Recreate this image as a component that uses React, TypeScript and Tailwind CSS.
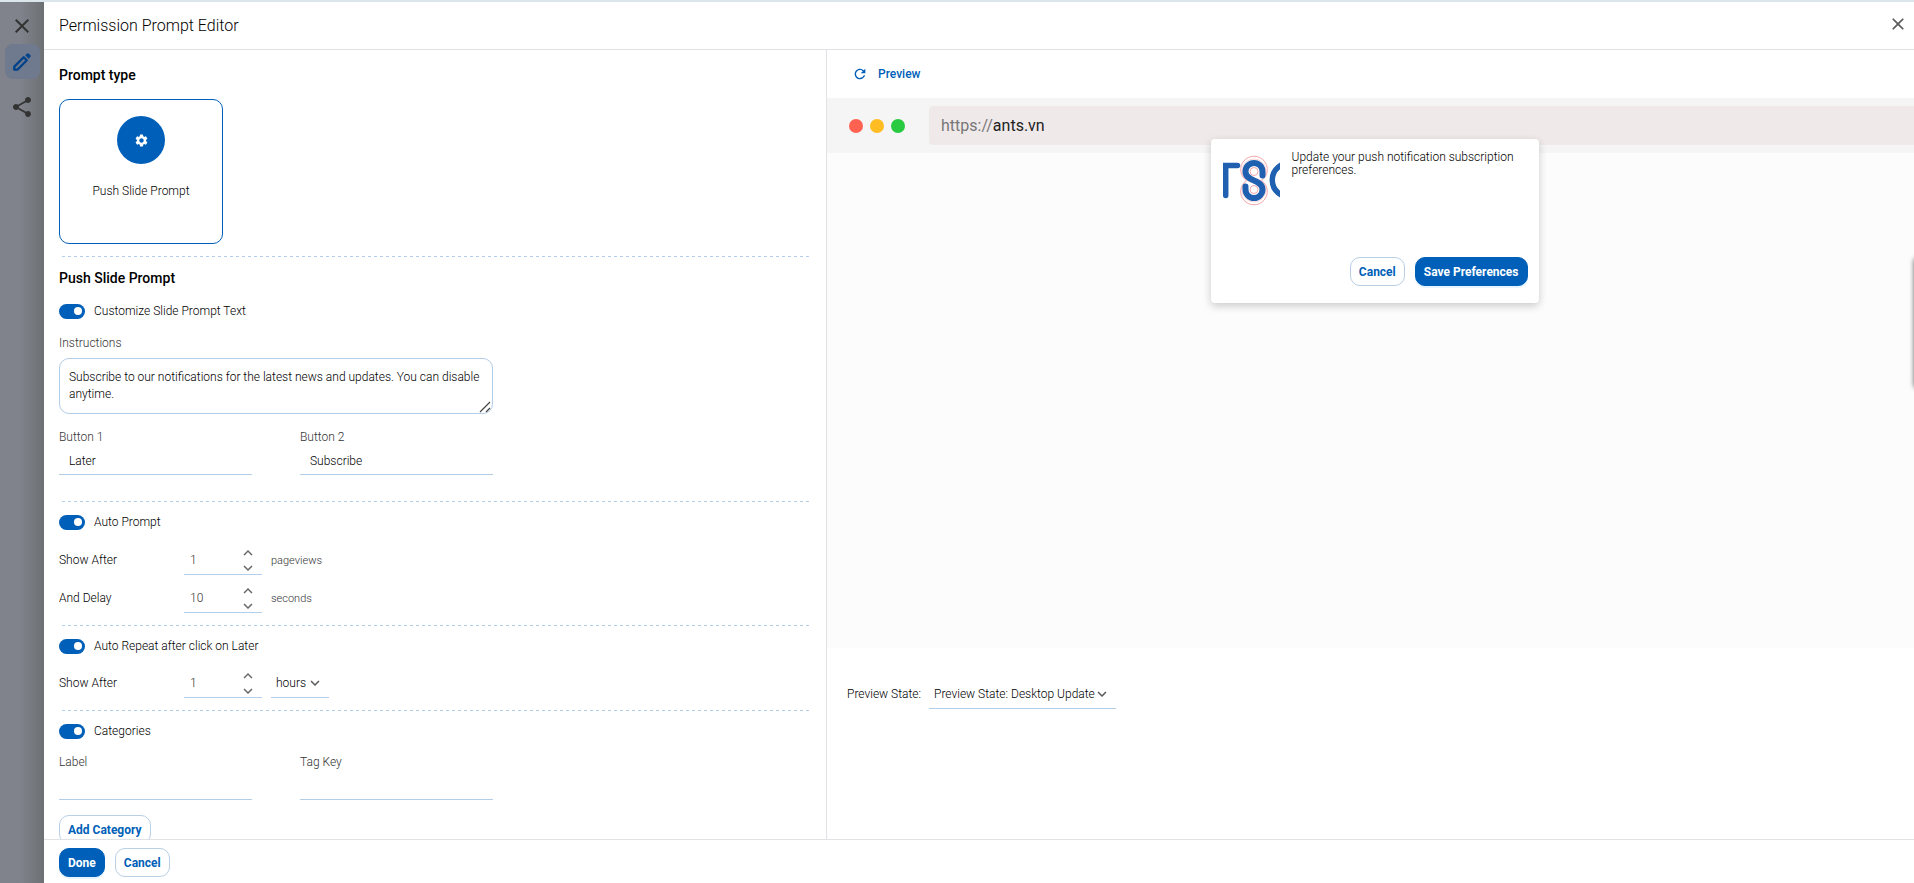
import { useId, useState, type ReactNode } from "react";
import {
  MdClose,
  MdKeyboardArrowDown,
  MdKeyboardArrowUp,
  MdRefresh,
  MdSettings,
  MdShare,
} from "react-icons/md";

function Divider() {
  return (
    <hr className="mr-3.5 ml-[3px] h-px border-0 bg-[repeating-linear-gradient(to_right,#b3cee8_0_3px,transparent_3px_6px)]" />
  );
}

function Toggle({ label }: { label: string }) {
  return (
    <label className="flex h-4 w-fit cursor-pointer items-center gap-[9px]">
      <input type="checkbox" defaultChecked className="peer sr-only" />
      <span className="flex h-[15px] w-[26px] items-center rounded-full bg-gray-400 px-[3px] peer-checked:justify-end peer-checked:bg-[#005fb8]">
        <span className="size-2 rounded-full bg-white" />
      </span>
      <span>{label}</span>
    </label>
  );
}

function Field({ label, value = "" }: { label: string; value?: string }) {
  const id = useId();
  return (
    <div className="flex flex-1 flex-col">
      <label htmlFor={id} className="h-4 leading-4 text-[#333]">
        {label}
      </label>
      <input
        id={id}
        defaultValue={value}
        className="mt-1 h-[26px] w-full border-b border-[#b3cee8] px-2.5 pb-0.5 outline-none"
      />
    </div>
  );
}

function NumberRow({ label, initial, children }: { label: string; initial: number; children: ReactNode }) {
  const id = useId();
  const [value, setValue] = useState(initial);
  return (
    <div className="flex h-[30px] items-center">
      <label htmlFor={id} className="w-[125px]">
        {label}
      </label>
      <div className="flex h-[30px] w-[78px] items-center border-b border-[#b3cee8] pr-[5px]">
        <input
          id={id}
          value={value}
          onChange={(e) => setValue(Number(e.target.value) || 0)}
          className="w-0 flex-1 pl-1.5 text-[#333] outline-none"
        />
        <div className="flex flex-col pb-0.5 text-[#666]">
          <button type="button" aria-label="Increase" onClick={() => setValue(value + 1)} className="h-[15px]">
            <MdKeyboardArrowUp size={18} />
          </button>
          <button type="button" aria-label="Decrease" onClick={() => setValue(value - 1)} className="h-[15px]">
            <MdKeyboardArrowDown size={18} />
          </button>
        </div>
      </div>
      <div className="ml-[9px]">{children}</div>
    </div>
  );
}

function Select({ label, options, className }: { label: string; options: string[]; className: string }) {
  return (
    <div className={`relative flex h-[30px] items-center border-b border-[#b3cee8] ${className}`}>
      <select aria-label={label} className="h-full w-full appearance-none pl-[5px] outline-none">
        {options.map((o) => (
          <option key={o}>{o}</option>
        ))}
      </select>
      <MdKeyboardArrowDown size={18} className="pointer-events-none absolute right-[5px] text-[#595959]" />
    </div>
  );
}

function Button({ primary = false, children }: { primary?: boolean; children: ReactNode }) {
  return (
    <button
      type="button"
      className={`h-[29px] rounded-[10px] border px-2 font-bold whitespace-nowrap ${
        primary
          ? "border-[#005fb8] bg-[#005fb8] text-white shadow-[0_2px_0_rgba(5,145,255,0.1)]"
          : "border-[#b8cfe6] bg-white text-[#005fb8]"
      }`}
    >
      {children}
    </button>
  );
}

function PencilIcon() {
  return (
    <svg viewBox="0 0 18 18" className="size-[18px]" aria-hidden="true">
      <path
        d="M1.300 16.700v-3.100L10.700 4.200l3.100 3.100-9.400 9.400z"
        fill="none"
        stroke="currentColor"
        strokeWidth="2.300"
        strokeLinejoin="round"
      />
      <path d="M12.300 2.300 13.900.8a1.400 1.400 0 0 1 2 0l1.300 1.300a1.400 1.400 0 0 1 0 2l-1.500 1.600z" fill="currentColor" />
    </svg>
  );
}

function BrandLogo() {
  return (
    <svg viewBox="0 0 57 57" className="mt-px size-[57px] shrink-0" fill="none" aria-hidden="true">
      <g stroke="#f08f94" strokeWidth="0.800">
        <path d="M23.500 28.500a13.300 13.300 0 1 1 15 0a13.300 13.300 0 1 1-15 0z" />
        <circle cx="31" cy="19.500" r="4" />
        <circle cx="31" cy="37.500" r="4" />
      </g>
      <g stroke="#f6b9bc" strokeWidth="0.600">
        <circle cx="31" cy="19" r="11.900" />
        <circle cx="31" cy="38" r="11.900" />
      </g>
      <g stroke="#1f61b0" strokeWidth="5.500" strokeLinecap="round">
        <path d="M2.700 43.500V13.500H14.500" strokeLinejoin="miter" />
        <path d="M39.500 23.500v-4a8.500 8.500 0 0 0-17 0c0 5 3.500 7 8.500 9s8.500 4 8.500 9a8.500 8.500 0 0 1-17 0V34.500" strokeWidth="6" />
        <path d="M59 12.500C46 20 46 36 59 43.500" />
      </g>
    </svg>
  );
}

export default function App() {
  return (
    <div className="flex h-screen flex-col overflow-hidden border-t-2 border-[#dbe5ec] bg-white font-[Roboto,sans-serif] text-xs font-light text-black">
      <div className="flex min-h-0 flex-1">
        <nav className="flex w-11 shrink-0 flex-col items-center bg-linear-to-r from-[#80838c] from-45% to-[#6d7073] text-[#333]">
          <button type="button" aria-label="Close" className="mt-3">
            <MdClose size={24} />
          </button>
          <button
            type="button"
            aria-label="Edit"
            className="mt-1.5 flex size-[35px] items-center justify-center rounded-lg bg-[#6f7a8e] text-[#00428a]"
          >
            <PencilIcon />
          </button>
          <button type="button" aria-label="Share" className="mt-4">
            <MdShare size={24} />
          </button>
        </nav>

        <main className="flex min-w-0 flex-1 flex-col">
          <header className="flex h-12 shrink-0 items-center justify-between border-b border-[#e0e2e5] pr-1.5 pl-[15px]">
            <h1 className="text-base">Permission Prompt Editor</h1>
            <button type="button" aria-label="Close editor" className="mb-1 text-[#595959]">
              <MdClose size={20} />
            </button>
          </header>

          <div className="flex min-h-0 flex-1">
            <section className="w-[783px] shrink-0 overflow-y-auto border-r border-[#e0e2e5] pl-[15px] [scrollbar-width:none]">
              <h2 className="pt-4 text-sm leading-[18px] font-medium">Prompt type</h2>
              <button
                type="button"
                className="mt-[15px] flex h-[145px] w-[164px] flex-col items-center rounded-[10px] border border-[#005fb8] pt-4"
              >
                <span className="flex size-12 items-center justify-center rounded-full bg-[#005fb8] text-white">
                  <MdSettings size={15} />
                </span>
                <span className="mt-[19px]">Push Slide Prompt</span>
              </button>

              <div className="mt-3">
                <Divider />
              </div>
              <h2 className="mt-3 text-sm leading-[18px] font-medium">Push Slide Prompt</h2>
              <div className="mt-4">
                <Toggle label="Customize Slide Prompt Text" />
              </div>

              <label htmlFor="instructions" className="mt-4 block leading-4 text-[#333]">
                Instructions
              </label>
              <div className="relative mt-[7px] w-[434px]">
                <textarea
                  id="instructions"
                  className="block h-14 w-full resize-none overflow-hidden rounded-[10px] border border-[#b3cee8] py-2.5 pr-1 pl-[9px] leading-[17px] outline-none"
                  defaultValue="Subscribe to our notifications for the latest news and updates. You can disable anytime."
                />
                <svg
                  viewBox="0 0 12 12"
                  className="pointer-events-none absolute right-0.5 bottom-px size-3"
                  fill="none"
                  stroke="#444"
                  strokeWidth="1.2"
                  aria-hidden="true"
                >
                  <path d="M1 11 11 1M7 11l4-4" />
                </svg>
              </div>

              <div className="mt-[15px] flex w-[434px] gap-12">
                <Field label="Button 1" value="Later" />
                <Field label="Button 2" value="Subscribe" />
              </div>

              <div className="mt-[26px]">
                <Divider />
              </div>
              <div className="mt-3">
                <Toggle label="Auto Prompt" />
              </div>
              <div className="mt-[15px] flex flex-col gap-2">
                <NumberRow label="Show After" initial={1}>
                  <span className="text-[11px] text-[#333]">pageviews</span>
                </NumberRow>
                <NumberRow label="And Delay" initial={10}>
                  <span className="text-[11px] text-[#333]">seconds</span>
                </NumberRow>
              </div>

              <div className="mt-3">
                <Divider />
              </div>
              <div className="mt-3">
                <Toggle label="Auto Repeat after click on Later" />
              </div>
              <div className="mt-[14px]">
                <NumberRow label="Show After" initial={1}>
                  <Select label="Repeat unit" options={["hours", "days"]} className="w-[58px]" />
                </NumberRow>
              </div>

              <div className="mt-3">
                <Divider />
              </div>
              <div className="mt-3">
                <Toggle label="Categories" />
              </div>
              <div className="mt-[15px] flex w-[434px] gap-12">
                <Field label="Label" />
                <Field label="Tag Key" />
              </div>
              <div className="mt-[15px] pb-5">
                <Button>Add Category</Button>
              </div>
            </section>

            <section className="relative min-w-0 flex-1">
              <button type="button" className="flex h-12 items-center gap-2.5 pl-[25px] font-medium text-[#005fb8]">
                <MdRefresh size={16} />
                Preview
              </button>

              <div className="relative">
                <div className="flex h-[55px] items-center bg-[#f5f5f5] pl-[22px]">
                  <span className="mr-[7px] size-3.5 rounded-full bg-[#ff6250]" />
                  <span className="mr-[7px] size-3.5 rounded-full bg-[#ffbd23]" />
                  <span className="size-3.5 rounded-full bg-[#28ca42]" />
                  <div className="ml-6 flex h-[39px] flex-1 items-center rounded-l-sm bg-[#efe9ea] pl-3 text-base font-normal">
                    <span className="text-[#777]">https://</span>
                    <span className="text-[#222]">ants.vn</span>
                  </div>
                </div>
                <div className="h-[495px] bg-[#fcfcfc]" />

                <div className="absolute inset-x-0 top-[41px] flex justify-center pl-2">
                  <div
                    role="dialog"
                    aria-label="Push notification subscription"
                    className="flex h-[164px] w-[328px] flex-col justify-between rounded bg-white pt-3 pr-[11px] pb-[17px] pl-3 shadow-[0_3px_9px_rgba(0,0,0,0.2)]"
                  >
                    <div className="flex gap-3">
                      <BrandLogo />
                      <p className="leading-[13px]">Update your push notification subscription preferences.</p>
                    </div>
                    <div className="flex justify-end gap-2.5">
                      <Button>Cancel</Button>
                      <Button primary>Save Preferences</Button>
                    </div>
                  </div>
                </div>
              </div>

              <div className="mt-[31px] flex items-center pl-5">
                <span className="w-[82px]">Preview State:</span>
                <Select
                  label="Preview State"
                  options={["Preview State: Desktop Update", "Preview State: Desktop Subscribe"]}
                  className="w-[187px]"
                />
              </div>

              <div className="absolute top-[208px] -right-2 h-[130px] w-2 rounded-l bg-white shadow-[0_0_5px_rgba(0,0,0,0.6)]" />
            </section>
          </div>

          <footer className="flex h-11 shrink-0 items-center gap-2.5 border-t border-[#e0e2e5] pt-0.5 pl-[15px]">
            <Button primary>Done</Button>
            <Button>Cancel</Button>
          </footer>
        </main>
      </div>
    </div>
  );
}
